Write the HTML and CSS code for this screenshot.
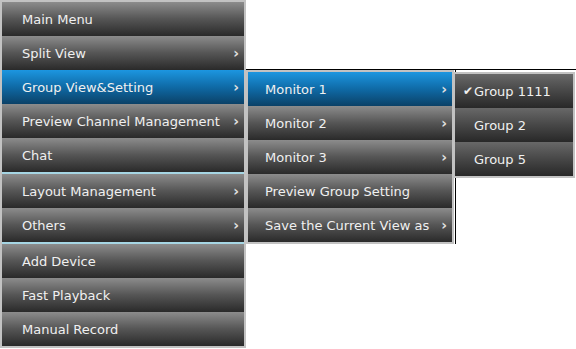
FILE: index.html
```html
<!DOCTYPE html>
<html>
<head>
	<title>Menu</title>
	<meta name="viewport" content="width=device-width, initial-scale=1.0" />
	<link rel="stylesheet" href="styles.css">
</head>
<body>
	<div class="screen">
		<ul class="menu main">
			<li class="item">Main Menu</li>
			<li class="item">Split View<span class="arrow">›</span></li>
			<li class="item active">Group View&amp;Setting<span class="arrow">›</span></li>
			<li class="item">Preview Channel Management<span class="arrow">›</span></li>
			<li class="item">Chat</li>
			<li class="item sep">Layout Management<span class="arrow">›</span></li>
			<li class="item">Others<span class="arrow">›</span></li>
			<li class="item sep">Add Device</li>
			<li class="item">Fast Playback</li>
			<li class="item">Manual Record</li>
		</ul>
		<div class="frame">
			<ul class="menu sub">
				<li class="item active">Monitor 1<span class="arrow">›</span></li>
				<li class="item">Monitor 2<span class="arrow">›</span></li>
				<li class="item">Monitor 3<span class="arrow">›</span></li>
				<li class="item">Preview Group Setting</li>
				<li class="item">Save the Current View as<span class="arrow">›</span></li>
			</ul>
			<div class="edge">
				<ul class="menu groups">
					<li class="item"><span class="check">✔</span>Group 1111</li>
					<li class="item"><span class="check"></span>Group 2</li>
					<li class="item"><span class="check"></span>Group 5</li>
				</ul>
			</div>
		</div>
	</div>
</body>
</html>
```

FILE: styles.css
```css
html, body {
	margin: 0;
	background: #fff;
	font-family: "DejaVu Sans", sans-serif;
	font-size: 13px;
}
ul {
	list-style: none;
	margin: 0;
	padding: 0;
}
.screen {
	display: flex;
	align-items: flex-start;
}
.menu {
	border: 2px solid #c2c2c2;
	background: #c2c2c2;
}
.item {
	display: flex;
	justify-content: space-between;
	align-items: center;
	height: 34px;
	color: #f0f0f0;
	background: linear-gradient(#8c8c8c, #555 50%, #2a2a2a);
	white-space: nowrap;
}
.item.active {
	background: linear-gradient(#1c96e0, #0f6aa6 50%, #0b4167);
}
.item.sep {
	border-top: 2px solid #a6d6e4;
}
.arrow {
	color: #e0e0e0;
	font-size: 14px;
	font-weight: bold;
}
.main {
	width: 242px;
}
.main .item {
	padding: 0 5px 0 20px;
}
.frame {
	display: flex;
	align-items: flex-start;
	margin-top: 69px;
	border-top: 1px solid #000;
	flex: 1;
}
.sub {
	width: 204px;
	background: #c2c2c2;
}
.sub .item {
	padding: 0 5px 0 17px;
}
.edge {
	flex: 1;
	padding-top: 2px;
	border-left: 1px solid #000;
	margin-left: 1px;
	min-height: 172px;
}
.groups {
	margin-left: -3px;
	width: 118px;
}
.groups .item {
	justify-content: flex-start;
	background: linear-gradient(#686868, #474747 50%, #282828);
}
.check {
	width: 11px;
	margin-left: 8px;
	font-size: 12px;
}
```
